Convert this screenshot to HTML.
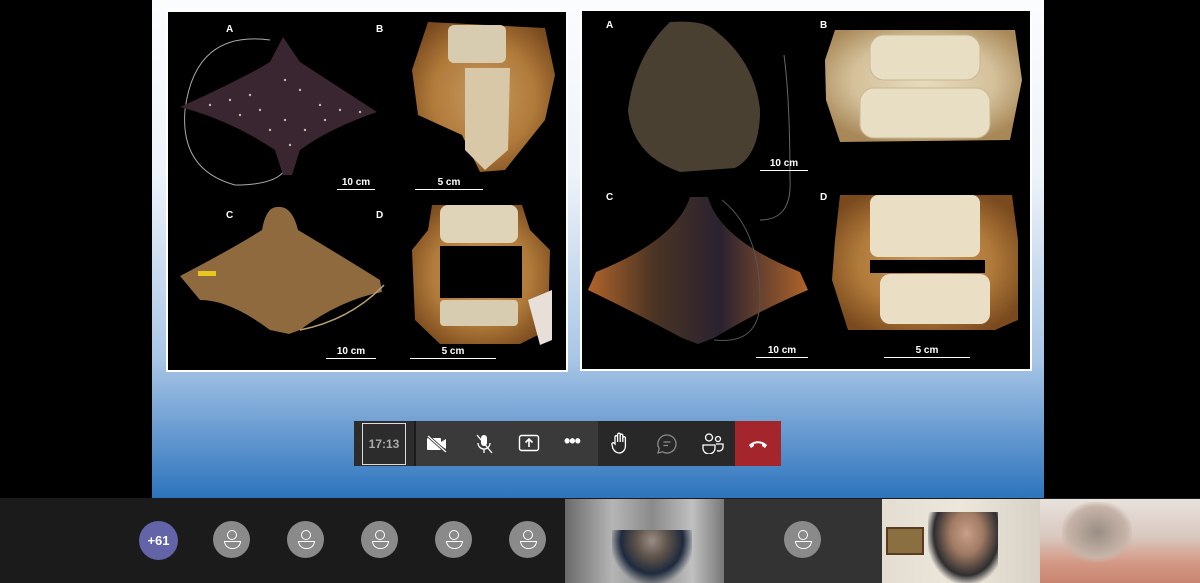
<!DOCTYPE html><html><head><style>
*{margin:0;padding:0;box-sizing:border-box}
body{width:1200px;height:583px;background:#000;position:relative;overflow:hidden;font-family:"Liberation Sans",sans-serif}
.a{position:absolute}
.slide{left:152px;top:0;width:892px;height:498px;background:linear-gradient(#fbfcfe 0%,#eef3f9 35%,#a9c6e6 72%,#2d74bd 100%)}
.panel{background:#000;border:2px solid #fff}
.lbl{color:#fff;font-size:10px;font-weight:bold}
.sc{color:#fff;font-size:10px;font-weight:bold;border-bottom:1px solid #fff;text-align:center;padding-bottom:1px}
.strip{left:0;top:498px;width:1200px;height:85px;background:#1b1b1b}
.av{width:37px;height:37px;border-radius:50%;background:#8a8a8a;top:521px}
.av::before{content:"";position:absolute;left:14px;top:9px;width:8px;height:8px;border:1.5px solid #fff;border-radius:50%}
.av::after{content:"";position:absolute;left:11px;top:20px;width:15px;height:6px;border:1.5px solid #fff;border-radius:0 0 8px 8px}
.tb{top:421px;height:45px}
svg{position:absolute}
</style></head><body>
<div class="a slide"></div>
<div class="a panel" style="left:166px;top:10px;width:402px;height:362px"></div>
<div class="a panel" style="left:580px;top:9px;width:452px;height:362px"></div>
<svg style="left:0;top:0" width="1200" height="400" viewBox="0 0 1200 400">
<defs>
<radialGradient id="bone" cx="50%" cy="45%" r="60%"><stop offset="0" stop-color="#e8dcc0"/><stop offset="0.6" stop-color="#d4c09a"/><stop offset="1" stop-color="#a88858"/></radialGradient>
<radialGradient id="rust" cx="50%" cy="50%" r="60%"><stop offset="0" stop-color="#c89a60"/><stop offset="0.6" stop-color="#b07a3a"/><stop offset="1" stop-color="#7a4a1e"/></radialGradient>
<linearGradient id="rc" x1="0" y1="0" x2="1" y2="0"><stop offset="0" stop-color="#b0642a"/><stop offset="0.3" stop-color="#4a3424"/><stop offset="0.6" stop-color="#2a2230"/><stop offset="1" stop-color="#b0642a"/></linearGradient>
</defs>
<!-- left A -->
<path d="M270 40 Q195 30 185 110 Q180 170 235 185 Q275 185 285 170" fill="none" stroke="#aaa" stroke-width="1"/>
<path d="M283 37 L300 62 L377 112 Q330 128 300 150 L292 175 L283 175 L275 150 Q230 120 180 107 Q240 80 270 62Z" fill="#3a2630"/>
<g fill="#e8dcd0" opacity="0.8"><circle cx="230" cy="100" r="1.2"/><circle cx="250" cy="95" r="1.2"/><circle cx="260" cy="110" r="1.2"/><circle cx="300" cy="90" r="1.2"/><circle cx="320" cy="105" r="1.2"/><circle cx="340" cy="110" r="1.2"/><circle cx="285" cy="80" r="1.2"/><circle cx="285" cy="120" r="1.2"/><circle cx="270" cy="130" r="1.2"/><circle cx="305" cy="130" r="1.2"/><circle cx="210" cy="105" r="1.2"/><circle cx="360" cy="112" r="1.2"/><circle cx="290" cy="145" r="1.2"/><circle cx="240" cy="115" r="1.2"/><circle cx="325" cy="120" r="1.2"/></g>
<!-- left B -->
<path d="M428 22 L545 28 L555 75 L545 120 L505 170 L480 172 L462 135 L418 115 L412 70Z" fill="url(#rust)"/>
<rect x="448" y="25" width="58" height="38" rx="6" fill="#d8ccb0"/>
<path d="M465 68 L510 68 L508 150 L485 170 L465 150Z" fill="#d8c8a8"/>
<!-- left C -->
<path d="M277 207 Q292 205 298 230 Q340 255 380 280 L382 292 Q340 300 300 330 L289 334 L270 330 Q230 300 200 300 L180 276 Q230 250 262 230 Q266 207 277 207Z" fill="#8e6a3e"/>
<path d="M300 330 Q350 320 384 285" fill="none" stroke="#b8a070" stroke-width="1.5"/>
<rect x="198" y="271" width="18" height="5" fill="#e8c820"/>
<!-- left D -->
<path d="M432 205 L522 205 L530 230 L550 250 L548 330 L520 344 L440 344 L415 320 L412 250 L428 230Z" fill="url(#rust)"/>
<rect x="440" y="205" width="78" height="38" rx="8" fill="#e0d4b8"/>
<rect x="440" y="300" width="78" height="26" rx="4" fill="#d8ccb0"/>
<rect x="440" y="246" width="82" height="52" fill="#000"/>
<path d="M528 300 L552 290 L552 340 L540 345Z" fill="#e8e0d8"/>
<!-- right A -->
<path d="M670 22 Q700 20 712 28 Q755 60 760 110 Q760 155 735 168 L680 172 Q632 155 628 110 Q635 55 670 22Z" fill="#4a4032"/>
<path d="M784 55 Q790 100 790 180 Q792 220 760 220" fill="none" stroke="#666" stroke-width="1"/>
<!-- right B -->
<path d="M835 30 L1015 30 L1022 80 L1010 140 L840 142 L826 100 L825 60Z" fill="url(#bone)"/>
<rect x="870" y="35" width="110" height="45" rx="14" fill="#e8dec4" stroke="#c8b890"/>
<rect x="860" y="88" width="130" height="50" rx="14" fill="#e8dec4" stroke="#c8b890"/>
<!-- right C -->
<path d="M690 197 L708 197 Q720 240 800 272 L808 290 Q760 310 714 338 L698 344 L682 338 Q630 310 588 290 L596 272 Q676 240 690 197Z" fill="url(#rc)"/>
<path d="M722 200 Q760 230 760 300 Q760 345 714 340" fill="none" stroke="#555" stroke-width="1"/>
<!-- right D -->
<path d="M840 195 L1012 195 L1018 240 L1018 320 L995 330 L848 330 L832 280 L835 240Z" fill="url(#rust)"/>
<rect x="870" y="195" width="110" height="62" rx="8" fill="#eadfc4"/>
<rect x="880" y="274" width="110" height="50" rx="10" fill="#eadfc4"/>
<rect x="870" y="260" width="115" height="13" fill="#000"/>
</svg>
<div class="a lbl" style="left:226px;top:24px">A</div><div class="a lbl" style="left:376px;top:24px">B</div>
<div class="a lbl" style="left:226px;top:210px">C</div><div class="a lbl" style="left:376px;top:210px">D</div>
<div class="a sc" style="left:337px;top:177px;width:38px">10 cm</div>
<div class="a sc" style="left:415px;top:177px;width:68px">5 cm</div>
<div class="a sc" style="left:326px;top:346px;width:50px">10 cm</div>
<div class="a sc" style="left:410px;top:346px;width:86px">5 cm</div>
<div class="a lbl" style="left:606px;top:20px">A</div><div class="a lbl" style="left:820px;top:20px">B</div>
<div class="a lbl" style="left:606px;top:192px">C</div><div class="a lbl" style="left:820px;top:192px">D</div>
<div class="a sc" style="left:760px;top:158px;width:48px">10 cm</div>
<div class="a sc" style="left:756px;top:345px;width:52px">10 cm</div>
<div class="a sc" style="left:884px;top:345px;width:86px">5 cm</div>
<!-- toolbar -->
<div class="a tb" style="left:354px;width:60px;background:#2d2c2c"></div>
<div class="a" style="left:362px;top:423px;width:44px;height:42px;border:1.5px solid #ddd;color:#aaa;font-size:12px;font-weight:bold;text-align:center;line-height:40px">17:13</div>
<div class="a tb" style="left:414px;width:184px;background:#3b3a3a;border-left:2px solid #1b1b1b"></div>
<div class="a tb" style="left:598px;width:137px;background:#292828"></div>
<div class="a tb" style="left:735px;width:46px;background:#a4262c"></div>
<svg style="left:426px;top:435px" width="22" height="18" viewBox="0 0 22 18"><rect x="1" y="3" width="14" height="12" rx="1" fill="#fff"/><path d="M15 7l5-3v10l-5-3z" fill="#fff"/><path d="M2 1l18 16" stroke="#3b3a3a" stroke-width="3"/><path d="M2 1l18 16" stroke="#fff" stroke-width="1.2"/></svg>
<svg style="left:474px;top:433px" width="20" height="22" viewBox="0 0 20 22"><rect x="7" y="2" width="6" height="11" rx="3" fill="#fff"/><path d="M4 10a6 6 0 0 0 12 0M10 16v4" stroke="#fff" stroke-width="1.3" fill="none"/><path d="M3 2l15 18" stroke="#fff" stroke-width="1.3"/></svg>
<svg style="left:518px;top:434px" width="22" height="18" viewBox="0 0 22 18"><rect x="1.5" y="1.5" width="19" height="15" rx="2" fill="none" stroke="#fff" stroke-width="1.4"/><path d="M11 13V5M7.5 8.5L11 5l3.5 3.5" stroke="#fff" stroke-width="1.6" fill="none"/></svg>
<div class="a" style="left:564px;top:431px;color:#fff;font-size:18px;font-weight:bold;letter-spacing:-1px">•••</div>
<svg style="left:610px;top:431px" width="20" height="24" viewBox="0 0 20 24"><path d="M5 13V6a1.3 1.3 0 0 1 2.6 0v5V3.5a1.3 1.3 0 0 1 2.6 0V11V4.5a1.3 1.3 0 0 1 2.6 0V11V7a1.3 1.3 0 0 1 2.6 0v8c0 4-3 7-6.5 7-3 0-4.5-2-6-4.5L2 13.5a1.3 1.3 0 0 1 2.2-1.3z" fill="none" stroke="#fff" stroke-width="1.3"/></svg>
<svg style="left:656px;top:433px" width="22" height="22" viewBox="0 0 22 22"><path d="M11 2a9 9 0 1 1-4.5 16.8L2 20l1.2-4.3A9 9 0 0 1 11 2z" fill="none" stroke="#8a8a8a" stroke-width="1.3"/><path d="M7.5 9h7M7.5 12.5h4.5" stroke="#8a8a8a" stroke-width="1.3"/></svg>
<svg style="left:701px;top:432px" width="24" height="22" viewBox="0 0 24 22"><circle cx="8" cy="5.5" r="3.5" fill="none" stroke="#fff" stroke-width="1.3"/><circle cx="17" cy="7" r="2.5" fill="none" stroke="#fff" stroke-width="1.3"/><path d="M2 13h12v3a6 6 0 0 1-12 0zM15 12h7v3a4 4 0 0 1-6 3.5" fill="none" stroke="#fff" stroke-width="1.3"/></svg>
<svg style="left:748px;top:439px" width="20" height="10" viewBox="0 0 20 10"><path d="M1 6c5-5 13-5 18 0l-2 3-3-2V5c-3-1-5-1-8 0v2L3 9z" fill="#fff"/></svg>
<!-- strip -->
<div class="a strip"></div>
<div class="a" style="left:139px;top:521px;width:39px;height:39px;border-radius:50%;background:#6264a7;color:#fff;font-size:13px;font-weight:bold;text-align:center;line-height:39px">+61</div>
<div class="a av" style="left:213px"></div><div class="a av" style="left:287px"></div><div class="a av" style="left:361px"></div><div class="a av" style="left:435px"></div><div class="a av" style="left:509px"></div>
<div class="a" style="left:565px;top:499px;width:159px;height:84px;background:linear-gradient(90deg,#6a6a6a,#b5b5b5 30%,#8a8a8a 55%,#c0c0c0 80%,#777)"></div>
<div class="a" style="left:612px;top:530px;width:80px;height:53px;background:radial-gradient(ellipse at 50% 20%,#9a8c84 0%,#5a5048 30%,#1e2a3e 55%,rgba(0,0,0,0) 75%)"></div>
<div class="a" style="left:724px;top:499px;width:158px;height:84px;background:#333"></div>
<div class="a av" style="left:784px;top:521px"></div>
<div class="a" style="left:882px;top:499px;width:158px;height:84px;background:linear-gradient(90deg,#e4ddd2,#ede6da 50%,#d8d2c6)"></div>
<div class="a" style="left:886px;top:527px;width:38px;height:28px;background:#8a7040;border:2px solid #5a3a20"></div>
<div class="a" style="left:928px;top:512px;width:70px;height:71px;background:radial-gradient(ellipse at 55% 30%,#c9a08a 0%,#a07a62 30%,#2e2e30 60%,rgba(0,0,0,0) 75%)"></div>
<div class="a" style="left:1040px;top:499px;width:160px;height:84px;background:linear-gradient(180deg,#e8e2dc,#d9c8c0 45%,#d49a86 75%,#c88470)"></div>
<div class="a" style="left:1062px;top:502px;width:70px;height:60px;border-radius:40%;background:radial-gradient(ellipse,#9a8e84 0%,#c7b4a8 60%,rgba(0,0,0,0) 75%)"></div>
</body></html>
